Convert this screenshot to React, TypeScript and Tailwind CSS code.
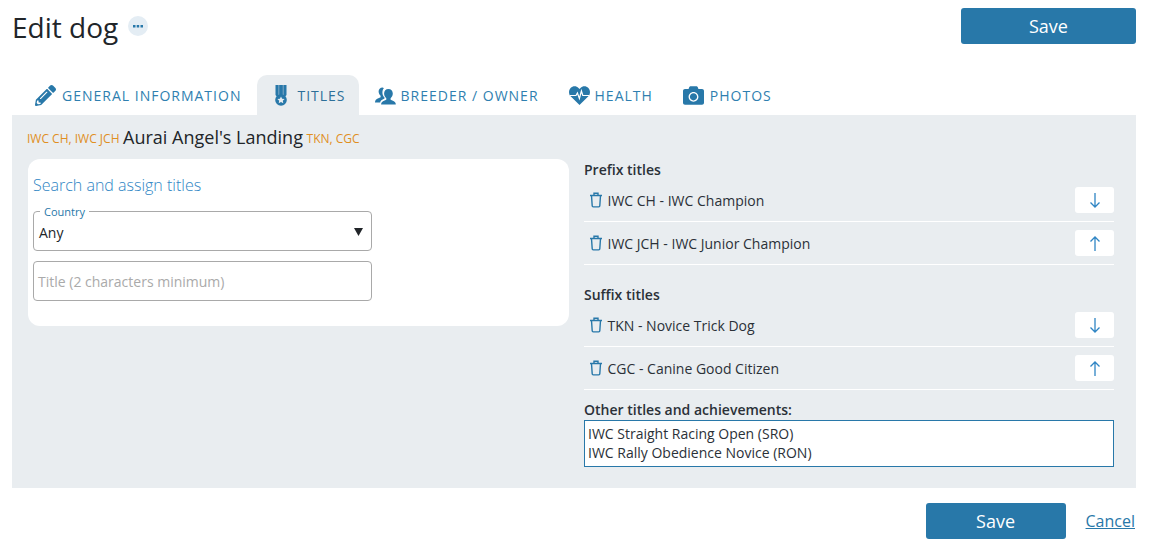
import React from 'react'
import { FaCamera, FaPencilAlt } from 'react-icons/fa'

function MedalIcon() {
  return (
    <svg width="12" height="21" viewBox="0 0 12 21" className="mr-[4px] ml-[2px]">
      <path fill="#2878a9" d="M0.500 0H11.500V10l-2 2.500h-7l-2-2.500z" />
      <path fill="#7fa9c6" d="M3.300 0h1v10h-1zM7.700 0h1v10h-1z" />
      <circle cx="6" cy="15" r="5.800" fill="#2878a9" />
      <path fill="#e9edf0" d="M6 11.400l1.100 2.300 2.500.3-1.800 1.700.5 2.500L6 17l-2.300 1.200.5-2.500L2.400 14l2.500-.3z" />
    </svg>
  )
}

function PeopleIcon() {
  return (
    <svg width="21" height="18" viewBox="0 0 21 18" className="-mr-px">
      <path fill="#2878a9" d="M7.600 0.400c-2.500 0-4 1.900-4 4.200 0 1.800 1 3.400 2 4.200v1.400c-2 .9-5.100 2-5.400 3.800-.1.600-.2 1.500-.2 1.500h5.200c.2-1.700 1.500-2.700 4.300-3.900v-1c-1.400-1.300-2.100-3.200-2.100-5.100 0-1.800.5-3.300 1.500-4.300-.4-.5-1-.8-1.300-.8z" />
      <path fill="#2878a9" d="M13.400 2c-2.700 0-4.300 2.100-4.300 4.600 0 2 1 3.700 2.200 4.600v1.500c-2.300 1-4.800 1.900-5.100 3.700L6.100 17.500h14.700l-.1-1.100c-.3-1.800-2.800-2.700-5.100-3.700v-1.500c1.200-.9 2.200-2.600 2.200-4.600 0-2.500-1.700-4.600-4.400-4.600z" />
    </svg>
  )
}

function HeartIcon() {
  return (
    <svg width="21" height="19" viewBox="0 0 21 19" className="-mr-px ml-px">
      <path fill="#2878a9" d="M10.500 19L1.600 10.200C-.5 8 -.5 4.400 1.600 2.100 3.800-.2 7.400-.2 9.500 2l1 1 1-1c2.100-2.200 5.700-2.200 7.900.1 2.100 2.300 2.100 5.900 0 8.100z" />
      <path fill="none" stroke="#ffffff" strokeWidth="1.200" d="M1 9.500h6l1.400-2.500 2 5.500 2-7.500 1.400 4.500H20" />
    </svg>
  )
}

function TrashIcon() {
  return (
    <svg width="14" height="16" viewBox="0 0 14 16" fill="none" stroke="#2878a9" strokeWidth="1.400">
      <path d="M1 3.500h12M5 3.300V1.200h4v2.100M2.500 3.500l.7 10.300c0 .6.500 1.100 1.100 1.100h5.400c.6 0 1.100-.5 1.100-1.100l.7-10.300" />
    </svg>
  )
}

function ArrowIcon({ dir }: { dir: 'up' | 'down' }) {
  return (
    <svg width="10" height="15" viewBox="0 0 10 15" fill="none" stroke="#2f85c4" strokeWidth="1.300">
      {dir === 'down' ? <path d="M5 0v14M.5 9.500L5 14l4.500-4.500" /> : <path d="M5 15V1M.5 5.500L5 1l4.500 4.500" />}
    </svg>
  )
}

function TabItem({ icon, label, active, wide }: { icon: React.ReactNode; label: string; active?: boolean; wide?: boolean }) {
  return (
    <div
      className={`flex h-10 items-center gap-[6px] rounded-t-[10px] pt-[1px] pl-[16px] text-[14px] tracking-[1px] ${
        wide ? 'pr-[16px]' : 'pr-[13px]'
      } ${active ? 'bg-[#e9edf0] text-[#2d6f99]' : 'text-[#2f7fb0]'}`}
    >
      {icon}
      <span>{label}</span>
    </div>
  )
}

function TitleRow({ label, dir }: { label: string; dir: 'up' | 'down' }) {
  return (
    <div className="flex h-[43px] items-center justify-between border-b border-white pl-[5px]">
      <div className="flex items-center gap-[4.500px] text-[14px] text-[#2b3138]">
        <TrashIcon />
        <span>{label}</span>
      </div>
      <button className="flex h-[26px] w-[39px] items-center justify-center rounded-[3px] bg-white">
        <ArrowIcon dir={dir} />
      </button>
    </div>
  )
}

export default function App() {
  return (
    <div className="h-[557px] w-[1157px] overflow-hidden bg-white pr-[21px] pl-[12px] font-['Open_Sans',sans-serif]">
      <div className="flex h-[75px] items-start justify-between pt-[8px]">
        <div className="flex items-center gap-[10px]">
          <h1 className="text-[28px] leading-[38px] text-[#212529]">Edit dog</h1>
          <div className="flex h-5 w-5 -translate-y-[1px] items-center justify-center rounded-full bg-[#e4edf4]">
            <svg width="10" height="3" viewBox="0 0 10 3">
              <path fill="#2878a9" d="M0 0h2.500v2.500H0zM3.700 0h2.500v2.500H3.700zM7.500 0H10v2.500H7.500z" />
            </svg>
          </div>
        </div>
        <button className="h-9 w-[175px] rounded-[3px] bg-[#2878a9] text-[18px] text-white">Save</button>
      </div>

      <div className="flex pl-[7px]">
        <TabItem icon={<FaPencilAlt size={21} color="#2878a9" />} label="GENERAL INFORMATION" wide />
        <TabItem icon={<MedalIcon />} label="TITLES" active />
        <TabItem icon={<PeopleIcon />} label="BREEDER / OWNER" />
        <TabItem icon={<HeartIcon />} label="HEALTH" />
        <TabItem icon={<FaCamera size={21} color="#2878a9" className="ml-[1px]" />} label="PHOTOS" />
      </div>

      <div className="h-[373px] bg-[#e9edf0] pr-[16px] pl-[15px]">
        <div className="flex h-[44px] items-center gap-[3.600px] pt-[1px]">
          <span className="pt-[2px] text-[12px] text-[#e08f1f]">IWC CH, IWC JCH</span>
          <span className="text-[18px] text-[#212529]">Aurai Angel's Landing</span>
          <span className="pt-[2px] text-[12px] text-[#e08f1f]">TKN, CGC</span>
        </div>

        <div className="flex items-start gap-[15px] pl-[1px]">
          <div className="h-[167px] w-[541px] rounded-[12px] bg-white px-[5px] pt-[15px]">
            <div className="text-[16px] leading-[22px] font-light text-[#2f85c4]">Search and assign titles</div>
            <div className="relative mt-[15px] h-10 w-[339px] rounded-[4px] border border-[#a9a9a9]">
              <span className="absolute -top-[7px] left-[6px] bg-white px-[4px] text-[11px] leading-[14px] text-[#2878a9]">
                Country
              </span>
              <div className="flex h-full items-center justify-between pt-[2px] pr-[8px] pl-[5px] text-[14px] text-[#212529]">
                <span>Any</span>
                <svg width="9" height="8" viewBox="0 0 9 8">
                  <path fill="#212529" d="M0 0h9L4.500 8z" />
                </svg>
              </div>
            </div>
            <div className="mt-[10px] flex h-10 w-[339px] items-center rounded-[4px] border border-[#a9a9a9] pl-[4px] text-[14px] text-[#aaaaaa]">
              Title (2 characters minimum)
            </div>
          </div>

          <div className="w-[530px]">
            <div className="text-[14px] leading-[22px] font-semibold text-[#2b3138]">Prefix titles</div>
            <div className="-mt-[2px]">
              <TitleRow label="IWC CH - IWC Champion" dir="down" />
              <TitleRow label="IWC JCH - IWC Junior Champion" dir="up" />
            </div>
            <div className="mt-[19px] text-[14px] leading-[22px] font-semibold text-[#2b3138]">Suffix titles</div>
            <div className="-mt-[2px]">
              <TitleRow label="TKN - Novice Trick Dog" dir="down" />
              <TitleRow label="CGC - Canine Good Citizen" dir="up" />
            </div>
            <div className="mt-[9px] text-[14px] leading-[22px] font-semibold text-[#2b3138]">
              Other titles and achievements:
            </div>
            <div className="-mt-[1px] h-[47px] border border-[#2878a9] bg-white px-[3px] pt-[3px] text-[14px] leading-[19px] text-[#2b3138]">
              <div>IWC Straight Racing Open (SRO)</div>
              <div>IWC Rally Obedience Novice (RON)</div>
            </div>
          </div>
        </div>
      </div>

      <div className="flex items-center justify-end gap-[20px] pt-[15px] pr-[1px]">
        <button className="h-9 w-[140px] rounded-[3px] bg-[#2878a9] text-[18px] text-white">Save</button>
        <a href="#" className="text-[16px] text-[#2878a9] underline">
          Cancel
        </a>
      </div>
    </div>
  )
}
